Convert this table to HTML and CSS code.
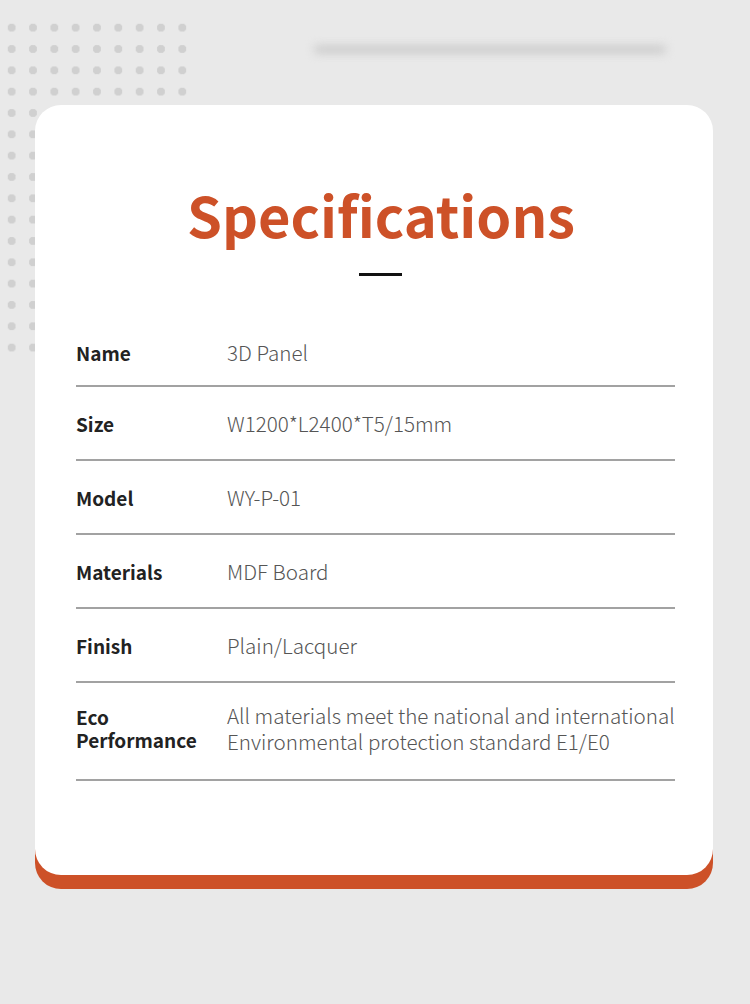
FILE: index.html
```html
<!DOCTYPE html>
<html lang="en">
<head>
<meta charset="utf-8">
<title>Specifications</title>
<link rel="stylesheet" href="styles.css">
</head>
<body>
<div class="page">
  <div class="dots"></div>
  <div class="blur-line"></div>
  <section class="card">
    <h1 class="title">Specifications</h1>
    <div class="rule"></div>
    <div class="table">
      <div class="row first"><div class="label">Name</div><div class="value">3D Panel</div></div>
      <div class="row"><div class="label">Size</div><div class="value">W1200*L2400*T5/15mm</div></div>
      <div class="row"><div class="label">Model</div><div class="value">WY-P-01</div></div>
      <div class="row"><div class="label">Materials</div><div class="value">MDF Board</div></div>
      <div class="row"><div class="label">Finish</div><div class="value">Plain/Lacquer</div></div>
      <div class="row tall"><div class="label">Eco<br>Performance</div><div class="value">All materials meet the national and international<br>Environmental protection standard E1/E0</div></div>
    </div>
  </section>
</div>
</body>
</html>
```
FILE: styles.css
```css
* { box-sizing: border-box; }
html, body { margin: 0; padding: 0; }
body {
  background: #e9e9e9;
  font-family: "Noto Sans CJK SC", "Noto Sans", sans-serif;
}
.page {
  position: relative;
  width: 750px;
  height: 1004px;
  padding-top: 105px;
  padding-left: 35px;
  overflow: hidden;
}
.dots {
  position: absolute;
  left: 1.35px;
  top: 17.35px;
  width: 192px;
  height: 341px;
  background-image: radial-gradient(circle, #d0d0d0 3.8px, transparent 4.4px);
  background-size: 21.33px 21.33px;
  z-index: 0;
}
.blur-line {
  position: absolute;
  left: 314px;
  top: 46px;
  width: 352px;
  height: 7px;
  border-radius: 4px;
  background: #c6c6c6;
  filter: blur(5px);
}
.card {
  position: relative;
  z-index: 1;
  width: 678px;
  height: 770px;
  background: #fff;
  border-radius: 26px;
  box-shadow: 0 14px 0 #cd5128;
  display: flex;
  flex-direction: column;
  align-items: center;
  padding: 70px 38px 0 41px;
}
.title {
  margin: 0 0 0 11px;
  font-size: 56px;
  line-height: 78px;
  font-weight: 700;
  color: #cd5128;
}
.rule {
  width: 43px;
  height: 3px;
  background: #111;
  margin: 20px 0 0 10px;
}
.table {
  align-self: stretch;
  margin-top: 40px;
}
.row {
  display: grid;
  grid-template-columns: 151px 1fr;
  align-items: center;
  padding: 24px 0 23px;
  border-bottom: 2px solid #a2a2a2;
}
.row.first { padding: 24px 0 20px; }
.row.tall { padding: 19px 0 25px; }
.label {
  font-size: 19px;
  line-height: 24px;
  font-weight: 700;
  color: #222;
}
.value {
  font-size: 20.6px;
  line-height: 25px;
  font-weight: 300;
  color: #555;
  white-space: nowrap;
}
.row.tall .label { line-height: 23px; }
.row.tall .value { line-height: 26px; }
```
